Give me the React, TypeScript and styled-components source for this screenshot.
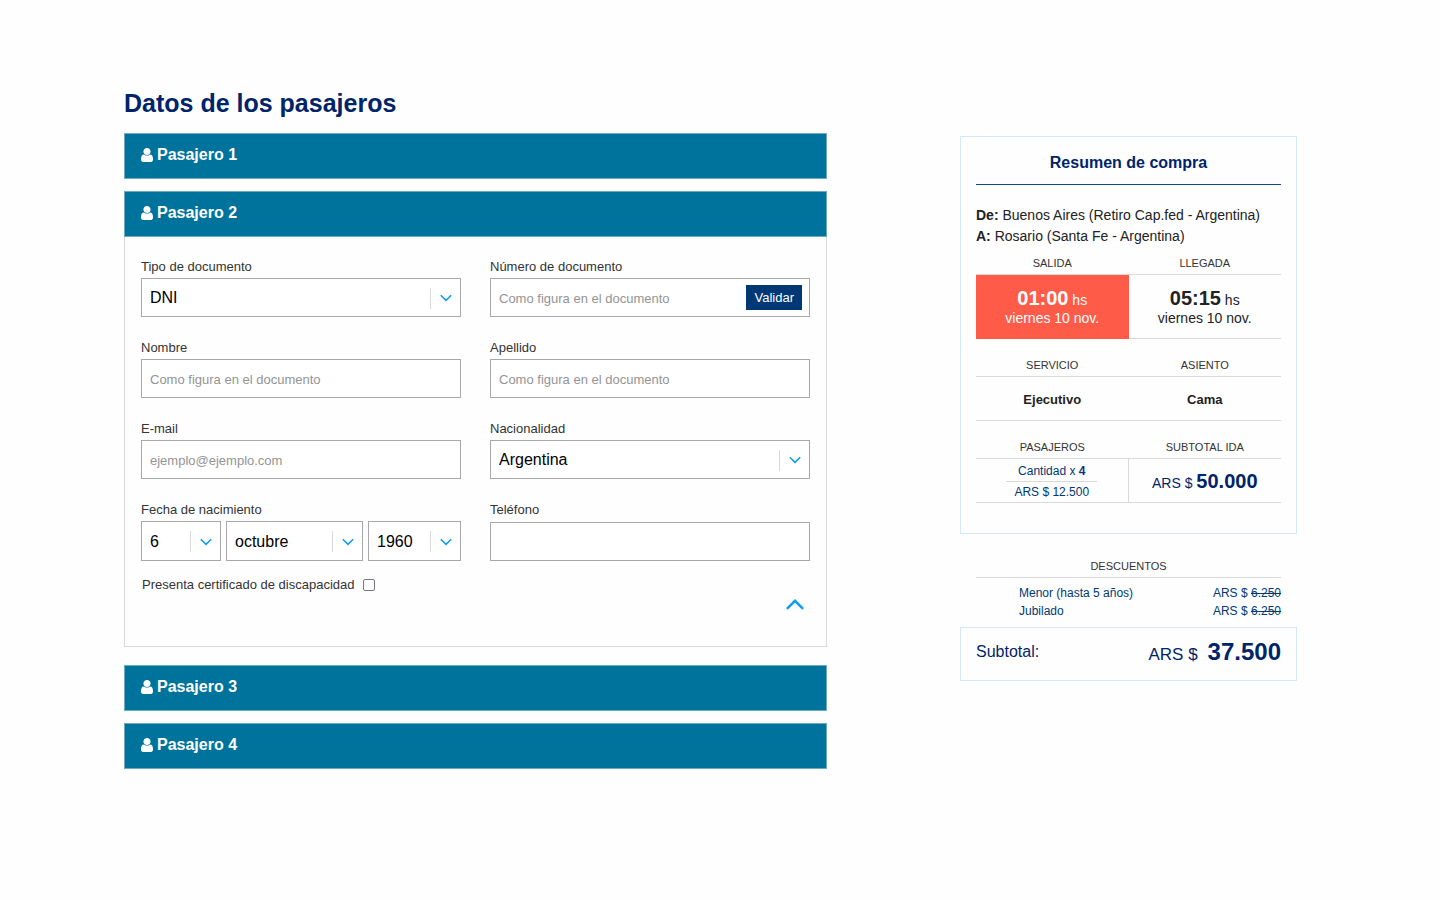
import React from "react";
import styled, { createGlobalStyle } from "styled-components";

const color = {
  navy: "#00246a",
  blue: "#003876",
  teal: "#00739c",
  sky: "#0a9bf2",
  coral: "#ff5b49",
  text: "#222222",
  label: "#333333",
  line: "#d9d9d9",
  field: "#a8a8a8",
  card: "#d3e9fb",
};

const GlobalStyle = createGlobalStyle`
  *, *::before, *::after { box-sizing: border-box; }
  body {
    margin: 0;
    background: #fefefe;
    color: ${color.text};
    font-family: "Liberation Sans", Arial, Helvetica, sans-serif;
    font-size: 14px;
  }
  button, input, select { font-family: inherit; }
`;

const Page = styled.main`
  display: grid;
  grid-template-columns: minmax(0, 703fr) minmax(0, 337fr);
  column-gap: 133px;
  align-items: start;
  padding: 88px 143px 48px 124px;

  @media (max-width: 1100px) {
    grid-template-columns: minmax(0, 1fr);
    row-gap: 32px;
    padding: 32px 24px;
  }
`;

const Title = styled.h1`
  margin: 0 0 15px;
  color: ${color.navy};
  font-size: 25px;
  line-height: 30px;
`;

const PassengerList = styled.div`
  display: flex;
  flex-direction: column;
  gap: 12px;
`;

const Passenger = styled.section<{ $open?: boolean }>`
  margin-bottom: ${(p) => (p.$open ? "6px" : "0")};
`;

const PassengerHeading = styled.h2`
  margin: 0;
  font-size: 16px;
`;

const PassengerBar = styled.button`
  display: flex;
  align-items: center;
  gap: 4px;
  width: 100%;
  height: 46px;
  padding: 0 16px 2px;
  border: 1px solid #6fa9c1;
  background: ${color.teal};
  color: #ffffff;
  font-size: 16px;
  font-weight: 700;
  text-align: left;
  cursor: pointer;
`;

const Form = styled.form`
  padding: 22px 16px 34px;
  border: 1px solid ${color.line};
  border-top: 0;
`;

const Fields = styled.div`
  display: grid;
  grid-template-columns: repeat(2, minmax(0, 1fr));
  gap: 23px 29px;
`;

const Field = styled.div`
  display: flex;
  flex-direction: column;
  justify-content: space-between;
  gap: 3px;
`;

const Group = styled.fieldset`
  display: flex;
  flex-direction: column;
  gap: 3px;
  min-width: 0;
  margin: 0;
  padding: 0;
  border: 0;
`;

const Label = styled.label`
  color: ${color.label};
  font-size: 13px;
  line-height: 16px;
`;

const InputBox = styled.div`
  display: flex;
  align-items: center;
  height: 39px;
  padding-right: 7px;
  border: 1px solid ${color.field};
  background: #ffffff;
`;

const Input = styled.input`
  flex: 1;
  min-width: 0;
  height: 100%;
  padding: 2px 8px 0;
  border: 0;
  outline: 0;
  background: transparent;
  color: #000000;
  font-size: 13px;

  &::placeholder {
    color: #949494;
    opacity: 1;
  }
`;

const ValidateButton = styled.button`
  height: 25px;
  padding: 0 8px;
  border: 0;
  background: ${color.blue};
  color: #ffffff;
  font-size: 13px;
  cursor: pointer;
`;

const SelectBox = styled.div<{ $tall?: boolean }>`
  position: relative;
  min-width: 0;
  height: ${(p) => (p.$tall ? "40px" : "39px")};
`;

const Select = styled.select`
  width: 100%;
  height: 100%;
  padding: 0 36px 0 8px;
  border: 1px solid ${color.field};
  border-radius: 0;
  background: #ffffff;
  color: #000000;
  font-size: 16px;
  appearance: none;
`;

const SelectMark = styled.span`
  position: absolute;
  top: 50%;
  right: 1px;
  display: flex;
  align-items: center;
  justify-content: center;
  width: 30px;
  height: 21px;
  margin-top: -10px;
  border-left: 1px solid ${color.line};
  pointer-events: none;
`;

const DateRow = styled.div`
  display: grid;
  grid-template-columns: 80fr 137fr 93fr;
  gap: 5px;
`;

const CheckRow = styled.div`
  display: flex;
  align-items: center;
  gap: 9px;
  margin-top: 16px;
  padding-left: 1px;
`;

const Checkbox = styled.input`
  width: 12px;
  height: 12px;
  margin: 0;
  border: 1px solid #77758a;
  border-radius: 2px;
  background: #ffffff;
  appearance: none;

  &:checked {
    background: ${color.blue};
  }
`;

const FormFooter = styled.div`
  display: flex;
  justify-content: flex-end;
  padding: 4px 4px 0;
`;

const CollapseButton = styled.button`
  display: flex;
  padding: 2px;
  border: 0;
  background: none;
  cursor: pointer;
`;

const Summary = styled.aside`
  margin-top: 48px;
  color: ${color.text};
`;

const Card = styled.section`
  padding: 16px 15px 30px;
  border: 1px solid ${color.card};
`;

const CardTitle = styled.h2`
  margin: 0 0 20px;
  padding-bottom: 11px;
  border-bottom: 1px solid #174489;
  color: ${color.navy};
  font-size: 16px;
  line-height: 20px;
  text-align: center;
`;

const Route = styled.p`
  margin: 0;
  font-size: 14px;
  line-height: 21px;
`;

const Table = styled.table<{ $gap: number }>`
  width: 100%;
  margin-top: ${(p) => p.$gap}px;
  border-collapse: separate;
  border-spacing: 0;
  table-layout: fixed;
`;

const HeadCell = styled.th`
  padding: 0 0 3px;
  border-bottom: 1px solid ${color.line};
  color: ${color.label};
  font-size: 11px;
  font-weight: 400;
  line-height: 16px;
`;

const Cell = styled.td<{ $highlight?: boolean; $divided?: boolean; $tall?: boolean }>`
  height: ${(p) => (p.$tall ? "64px" : "44px")};
  padding: 2px 0 0;
  border-bottom: 1px solid ${(p) => (p.$highlight ? color.coral : color.line)};
  border-right: ${(p) => (p.$divided ? `1px solid ${color.line}` : "0")};
  background: ${(p) => (p.$highlight ? color.coral : "transparent")};
  color: ${(p) => (p.$highlight ? "#ffffff" : "inherit")};
  line-height: 18px;
  text-align: center;
`;

const Time = styled.strong`
  font-size: 20px;
`;

const Option = styled.strong`
  font-size: 13px;
`;

const Quantity = styled.div`
  width: 91px;
  margin: 0 auto;
  border-bottom: 1px solid ${color.line};
  color: ${color.blue};
  font-size: 12px;
  line-height: 20px;
`;

const UnitPrice = styled.div`
  color: ${color.blue};
  font-size: 12px;
  line-height: 20px;
`;

const Price = styled.span`
  color: ${color.navy};
`;

const Discounts = styled.section`
  padding: 24px 16px 7px;
`;

const DiscountTitle = styled.h3`
  margin: 0;
  padding-bottom: 3px;
  border-bottom: 1px solid ${color.line};
  color: ${color.label};
  font-size: 11px;
  font-weight: 400;
  line-height: 16px;
  text-align: center;
`;

const DiscountCell = styled.td<{ $end?: boolean }>`
  padding: ${(p) => (p.$end ? "0" : "0 0 0 43px")};
  color: ${color.blue};
  font-size: 12px;
  line-height: 18px;
  text-align: ${(p) => (p.$end ? "right" : "left")};
`;

const DiscountTable = styled.table`
  width: 100%;
  margin-top: 6px;
  border-collapse: collapse;
`;

const Total = styled.section`
  display: flex;
  align-items: center;
  justify-content: space-between;
  height: 54px;
  padding: 0 15px 4px;
  border: 1px solid ${color.card};
  color: ${color.navy};
  font-size: 16px;
`;

const TotalAmount = styled.div`
  display: flex;
  align-items: baseline;
  gap: 10px;
  font-size: 17px;

  strong {
    font-size: 24px;
  }
`;

const UserIcon = () => (
  <svg width="12" height="14" viewBox="0 128 1280 1536" preserveAspectRatio="none" fill="currentColor" aria-hidden="true">
    <path d="M1280 1399q0 109-62.5 187t-150.5 78h-854q-88 0-150.5-78t-62.5-187q0-85 8.5-160.5t31.5-152 58.5-131 94-89 134.5-34.5q131 128 313 128t313-128q76 0 134.5 34.5t94 89 58.5 131 31.5 152 8.5 160.5zm-256-887q0 159-112.5 271.5t-271.5 112.5-271.5-112.5-112.5-271.5 112.5-271.5 271.5-112.5 271.5 112.5 112.5 271.5z" />
  </svg>
);

const ChevronDown = () => (
  <svg width="12" height="8" viewBox="0 0 12 8" fill="none" stroke={color.sky} strokeWidth="1.5" aria-hidden="true">
    <path d="M0.8 1.2 6 6.4 11.2 1.2" />
  </svg>
);

const ChevronUp = () => (
  <svg width="18" height="11" viewBox="0 0 18 11" fill="none" stroke={color.sky} strokeWidth="2.4" aria-hidden="true">
    <path d="M0.9 9.9 9 1.8 17.1 9.9" />
  </svg>
);

function PassengerHeader({ n, open = false }: { n: number; open?: boolean }) {
  return (
    <PassengerHeading>
      <PassengerBar type="button" aria-expanded={open}>
        <UserIcon />
        Pasajero {n}
      </PassengerBar>
    </PassengerHeading>
  );
}

type TextFieldProps = {
  id: string;
  label: string;
  type?: string;
  placeholder?: string;
  children?: React.ReactNode;
};

function TextField({ id, label, type = "text", placeholder, children }: TextFieldProps) {
  return (
    <Field>
      <Label htmlFor={id}>{label}</Label>
      <InputBox>
        <Input id={id} type={type} placeholder={placeholder} />
        {children}
      </InputBox>
    </Field>
  );
}

type DropdownProps = { id?: string; options: string[]; tall?: boolean; name?: string };

function Dropdown({ id, options, tall, name }: DropdownProps) {
  return (
    <SelectBox $tall={tall}>
      <Select id={id} aria-label={name} defaultValue={options[0]}>
        {options.map((option) => (
          <option key={option}>{option}</option>
        ))}
      </Select>
      <SelectMark>
        <ChevronDown />
      </SelectMark>
    </SelectBox>
  );
}

const discounts = [
  { name: "Menor (hasta 5 años)", amount: "6.250" },
  { name: "Jubilado", amount: "6.250" },
];

export default function App() {
  return (
    <>
      <GlobalStyle />
      <Page>
        <div>
          <Title>Datos de los pasajeros</Title>
          <PassengerList>
            <Passenger>
              <PassengerHeader n={1} />
            </Passenger>
            <Passenger $open>
              <PassengerHeader n={2} open />
              <Form onSubmit={(event) => event.preventDefault()}>
                <Fields>
                  <Field>
                    <Label htmlFor="doc-type">Tipo de documento</Label>
                    <Dropdown id="doc-type" options={["DNI"]} />
                  </Field>
                  <TextField id="doc-number" label="Número de documento" placeholder="Como figura en el documento">
                    <ValidateButton type="button">Validar</ValidateButton>
                  </TextField>
                  <TextField id="first-name" label="Nombre" placeholder="Como figura en el documento" />
                  <TextField id="last-name" label="Apellido" placeholder="Como figura en el documento" />
                  <TextField id="email" label="E-mail" type="email" placeholder="ejemplo@ejemplo.com" />
                  <Field>
                    <Label htmlFor="nationality">Nacionalidad</Label>
                    <Dropdown id="nationality" options={["Argentina"]} />
                  </Field>
                  <Group>
                    <Label htmlFor="birth-day">Fecha de nacimiento</Label>
                    <DateRow>
                      <Dropdown id="birth-day" options={["6"]} tall />
                      <Dropdown name="Mes" options={["octubre"]} tall />
                      <Dropdown name="Año" options={["1960"]} tall />
                    </DateRow>
                  </Group>
                  <TextField id="phone" label="Teléfono" type="tel" />
                </Fields>
                <CheckRow>
                  <Label htmlFor="certificate">Presenta certificado de discapacidad</Label>
                  <Checkbox id="certificate" type="checkbox" />
                </CheckRow>
                <FormFooter>
                  <CollapseButton type="button" aria-label="Contraer">
                    <ChevronUp />
                  </CollapseButton>
                </FormFooter>
              </Form>
            </Passenger>
            <Passenger>
              <PassengerHeader n={3} />
            </Passenger>
            <Passenger>
              <PassengerHeader n={4} />
            </Passenger>
          </PassengerList>
        </div>

        <Summary>
          <Card>
            <CardTitle>Resumen de compra</CardTitle>
            <Route>
              <strong>De:</strong> Buenos Aires (Retiro Cap.fed - Argentina)
            </Route>
            <Route>
              <strong>A:</strong> Rosario (Santa Fe - Argentina)
            </Route>
            <Table $gap={8}>
              <thead>
                <tr>
                  <HeadCell scope="col">SALIDA</HeadCell>
                  <HeadCell scope="col">LLEGADA</HeadCell>
                </tr>
              </thead>
              <tbody>
                <tr>
                  <Cell $tall $highlight>
                    <Time>01:00</Time> hs
                    <br />
                    viernes 10 nov.
                  </Cell>
                  <Cell $tall>
                    <Time>05:15</Time> hs
                    <br />
                    viernes 10 nov.
                  </Cell>
                </tr>
              </tbody>
            </Table>
            <Table $gap={18}>
              <thead>
                <tr>
                  <HeadCell scope="col">SERVICIO</HeadCell>
                  <HeadCell scope="col">ASIENTO</HeadCell>
                </tr>
              </thead>
              <tbody>
                <tr>
                  <Cell>
                    <Option>Ejecutivo</Option>
                  </Cell>
                  <Cell>
                    <Option>Cama</Option>
                  </Cell>
                </tr>
              </tbody>
            </Table>
            <Table $gap={18}>
              <thead>
                <tr>
                  <HeadCell scope="col">PASAJEROS</HeadCell>
                  <HeadCell scope="col">SUBTOTAL IDA</HeadCell>
                </tr>
              </thead>
              <tbody>
                <tr>
                  <Cell $divided>
                    <Quantity>
                      Cantidad x <strong>4</strong>
                    </Quantity>
                    <UnitPrice>ARS $ 12.500</UnitPrice>
                  </Cell>
                  <Cell>
                    <Price>
                      ARS $ <Time>50.000</Time>
                    </Price>
                  </Cell>
                </tr>
              </tbody>
            </Table>
          </Card>

          <Discounts>
            <DiscountTitle>DESCUENTOS</DiscountTitle>
            <DiscountTable>
              <tbody>
                {discounts.map((discount) => (
                  <tr key={discount.name}>
                    <DiscountCell>{discount.name}</DiscountCell>
                    <DiscountCell $end>
                      ARS $ <s>{discount.amount}</s>
                    </DiscountCell>
                  </tr>
                ))}
              </tbody>
            </DiscountTable>
          </Discounts>

          <Total>
            <span>Subtotal:</span>
            <TotalAmount>
              <span>ARS $</span>
              <strong>37.500</strong>
            </TotalAmount>
          </Total>
        </Summary>
      </Page>
    </>
  );
}
